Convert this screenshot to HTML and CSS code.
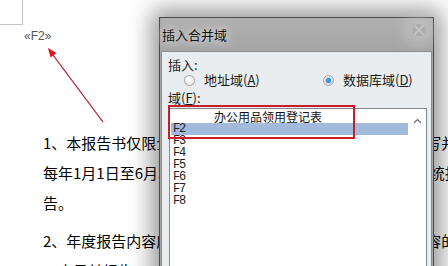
FILE: index.html
```html
<!DOCTYPE html>
<html lang="zh">
<head>
<meta charset="utf-8">
<title>插入合并域</title>
<link rel="stylesheet" href="styles.css">
</head>
<body>
<div class="page">
  <div class="doc">
    <div class="corner"></div>
    <div class="field">«F2»</div>
    <p class="para">1、本报告书仅限企业年度报告时使用，报告内容应如实填写并提交工商补<br>每年1月1日至6月30日，企业应当通过企业信用信息公示系统报送上一年度练<br>告。</p>
    <p class="para">2、年度报告内容应当真实、合法、有效，企业对其报告内容的真实性负责示<br>三十日前报告</p>
  </div>

  <svg class="arrow" width="448" height="266" viewBox="0 0 448 266">
    <line x1="103" y1="122" x2="53" y2="55" stroke="#a8121f" stroke-width="1.2"/>
    <polygon points="48,48 56.5,53 50.5,57.5" fill="#e4141c"/>
  </svg>

  <div class="dialog">
    <div class="titlebar">
      <span class="title">插入合并域</span>
      <svg class="close" width="14" height="12" viewBox="0 0 14 12">
        <path d="M2 1 L12 11 M12 1 L2 11" stroke="#c2c2c2" stroke-width="2.2" stroke-linecap="round"/>
      </svg>
    </div>
    <div class="client">
      <div class="label">插入:</div>
      <div class="radios">
        <div class="radio"><span class="dot"></span><span>地址域(<u>A</u>)</span></div>
        <div class="radio checked"><span class="dot"></span><span>数据库域(<u>D</u>)</span></div>
      </div>
      <div class="label label-field">域(<u>F</u>):</div>
      <div class="listbox">
        <ul class="items">
          <li class="head">办公用品领用登记表</li>
          <li class="sel">F2</li>
          <li>F3</li>
          <li>F4</li>
          <li>F5</li>
          <li>F6</li>
          <li>F7</li>
          <li>F8</li>
        </ul>
        <div class="scroll">
          <svg class="chev" width="9" height="6" viewBox="0 0 9 6">
            <path d="M1 5 L4.5 1.5 L8 5" fill="none" stroke="#6e6e6e" stroke-width="1.1"/>
          </svg>
        </div>
      </div>
    </div>
  </div>

  <div class="callout"></div>
</div>
</body>
</html>
```

FILE: styles.css
```css
html, body {
  margin: 0;
  padding: 0;
  background: #fff;
}

body {
  font-family: "Noto Sans CJK SC", "Liberation Sans", sans-serif;
}

.page {
  position: relative;
  width: 448px;
  height: 266px;
  overflow: hidden;
  background: #fff;
}

/* ---------- document behind ---------- */
.doc {
  white-space: nowrap;
}

.corner {
  width: 23px;
  height: 25px;
  box-sizing: border-box;
  border-right: 1px solid #c4c4c4;
  border-bottom: 1px solid #c4c4c4;
}

.field {
  margin: 4px 0 0 24px;
  font-family: "Liberation Sans", sans-serif;
  font-size: 12px;
  line-height: 14px;
  color: #555;
}

.para {
  margin: 85px 0 0 43px;
  font-size: 15px;
  font-weight: 400;
  line-height: 30px;
  color: #000;
}

.para + .para {
  margin-top: 8px;
}

/* ---------- annotation arrow ---------- */
.arrow {
  position: absolute;
  left: 0;
  top: 0;
}

/* ---------- dialog ---------- */
.dialog {
  position: absolute;
  left: 159px;
  top: 17px;
  width: 275px;
  height: 270px;
  box-sizing: border-box;
  border: 1px solid #4a4a4a;
  background: #a8a8a8;
  padding: 0 1px;
  display: flex;
  flex-direction: column;
  box-shadow: 0 0 22px 7px rgba(0, 0, 0, 0.42);
}

.titlebar {
  position: relative;
  flex: none;
  height: 33px;
  display: flex;
  align-items: center;
  background: linear-gradient(#b0b0b0, #a5a5a5);
}

.title {
  padding-left: 1px;
  font-size: 13px;
  color: #111;
  text-shadow: 0 0 6px #d8d8d8, 0 0 10px #d0d0d0, 0 0 14px #cfcfcf;
}

.close {
  position: absolute;
  right: 6px;
  top: 6px;
  border-radius: 50%;
  box-shadow: 0 0 12px 10px rgba(215, 215, 215, 0.35);
}

.client {
  flex: 1;
  min-height: 0;
  overflow: hidden;
  background: #e9edf0;
  border: 1px solid #8c8c8c;
  padding: 7px 0 0 6px;
  font-size: 13px;
  color: #1a1a1a;
}

.label {
  line-height: 12px;
  height: 12px;
}

.label-field {
  margin-top: 6px;
}

.radios {
  display: grid;
  grid-template-columns: 139px 1fr;
  margin: 3px 0 0 16px;
  line-height: 12px;
  height: 12px;
}

.radio {
  display: flex;
  align-items: center;
  gap: 9px;
}

.dot {
  width: 11px;
  height: 11px;
  box-sizing: border-box;
  border-radius: 50%;
  border: 1px solid #a2a2a2;
  background: radial-gradient(circle at 40% 40%, #ffffff, #e2e2e2);
  display: flex;
  align-items: center;
  justify-content: center;
  flex: none;
}

.checked .dot::after {
  content: "";
  width: 5px;
  height: 5px;
  border-radius: 50%;
  background: #4a93cf;
  box-shadow: 0 0 1px 1px rgba(120, 180, 230, 0.6);
}

u {
  text-decoration: underline;
  text-underline-offset: 1px;
}

/* ---------- list ---------- */
.listbox {
  margin: 4px 0 0 1px;
  width: 258px;
  height: 200px;
  box-sizing: border-box;
  border: 1px solid #848990;
  background: #fff;
  display: flex;
}

.items {
  list-style: none;
  margin: 0;
  padding: 2px 0 0 1px;
  flex: 1;
  font-family: "Liberation Mono", monospace;
  font-size: 12px;
  letter-spacing: -1.2px;
  color: #202020;
}

.items li {
  height: 12px;
  line-height: 12px;
  padding-left: 2px;
}

.items .head {
  padding-left: 43px;
  font-family: "Noto Sans CJK SC", sans-serif;
  letter-spacing: 0;
  color: #111;
}

.items .sel {
  background: #a2badb;
}

.scroll {
  width: 18px;
  flex: none;
  display: flex;
  justify-content: center;
  align-items: flex-start;
  padding-top: 9px;
  box-sizing: border-box;
}

/* ---------- red callout box ---------- */
.callout {
  position: absolute;
  left: 168px;
  top: 105px;
  width: 187px;
  height: 34px;
  box-sizing: border-box;
  border: 2px solid #c61e2a;
}
```
